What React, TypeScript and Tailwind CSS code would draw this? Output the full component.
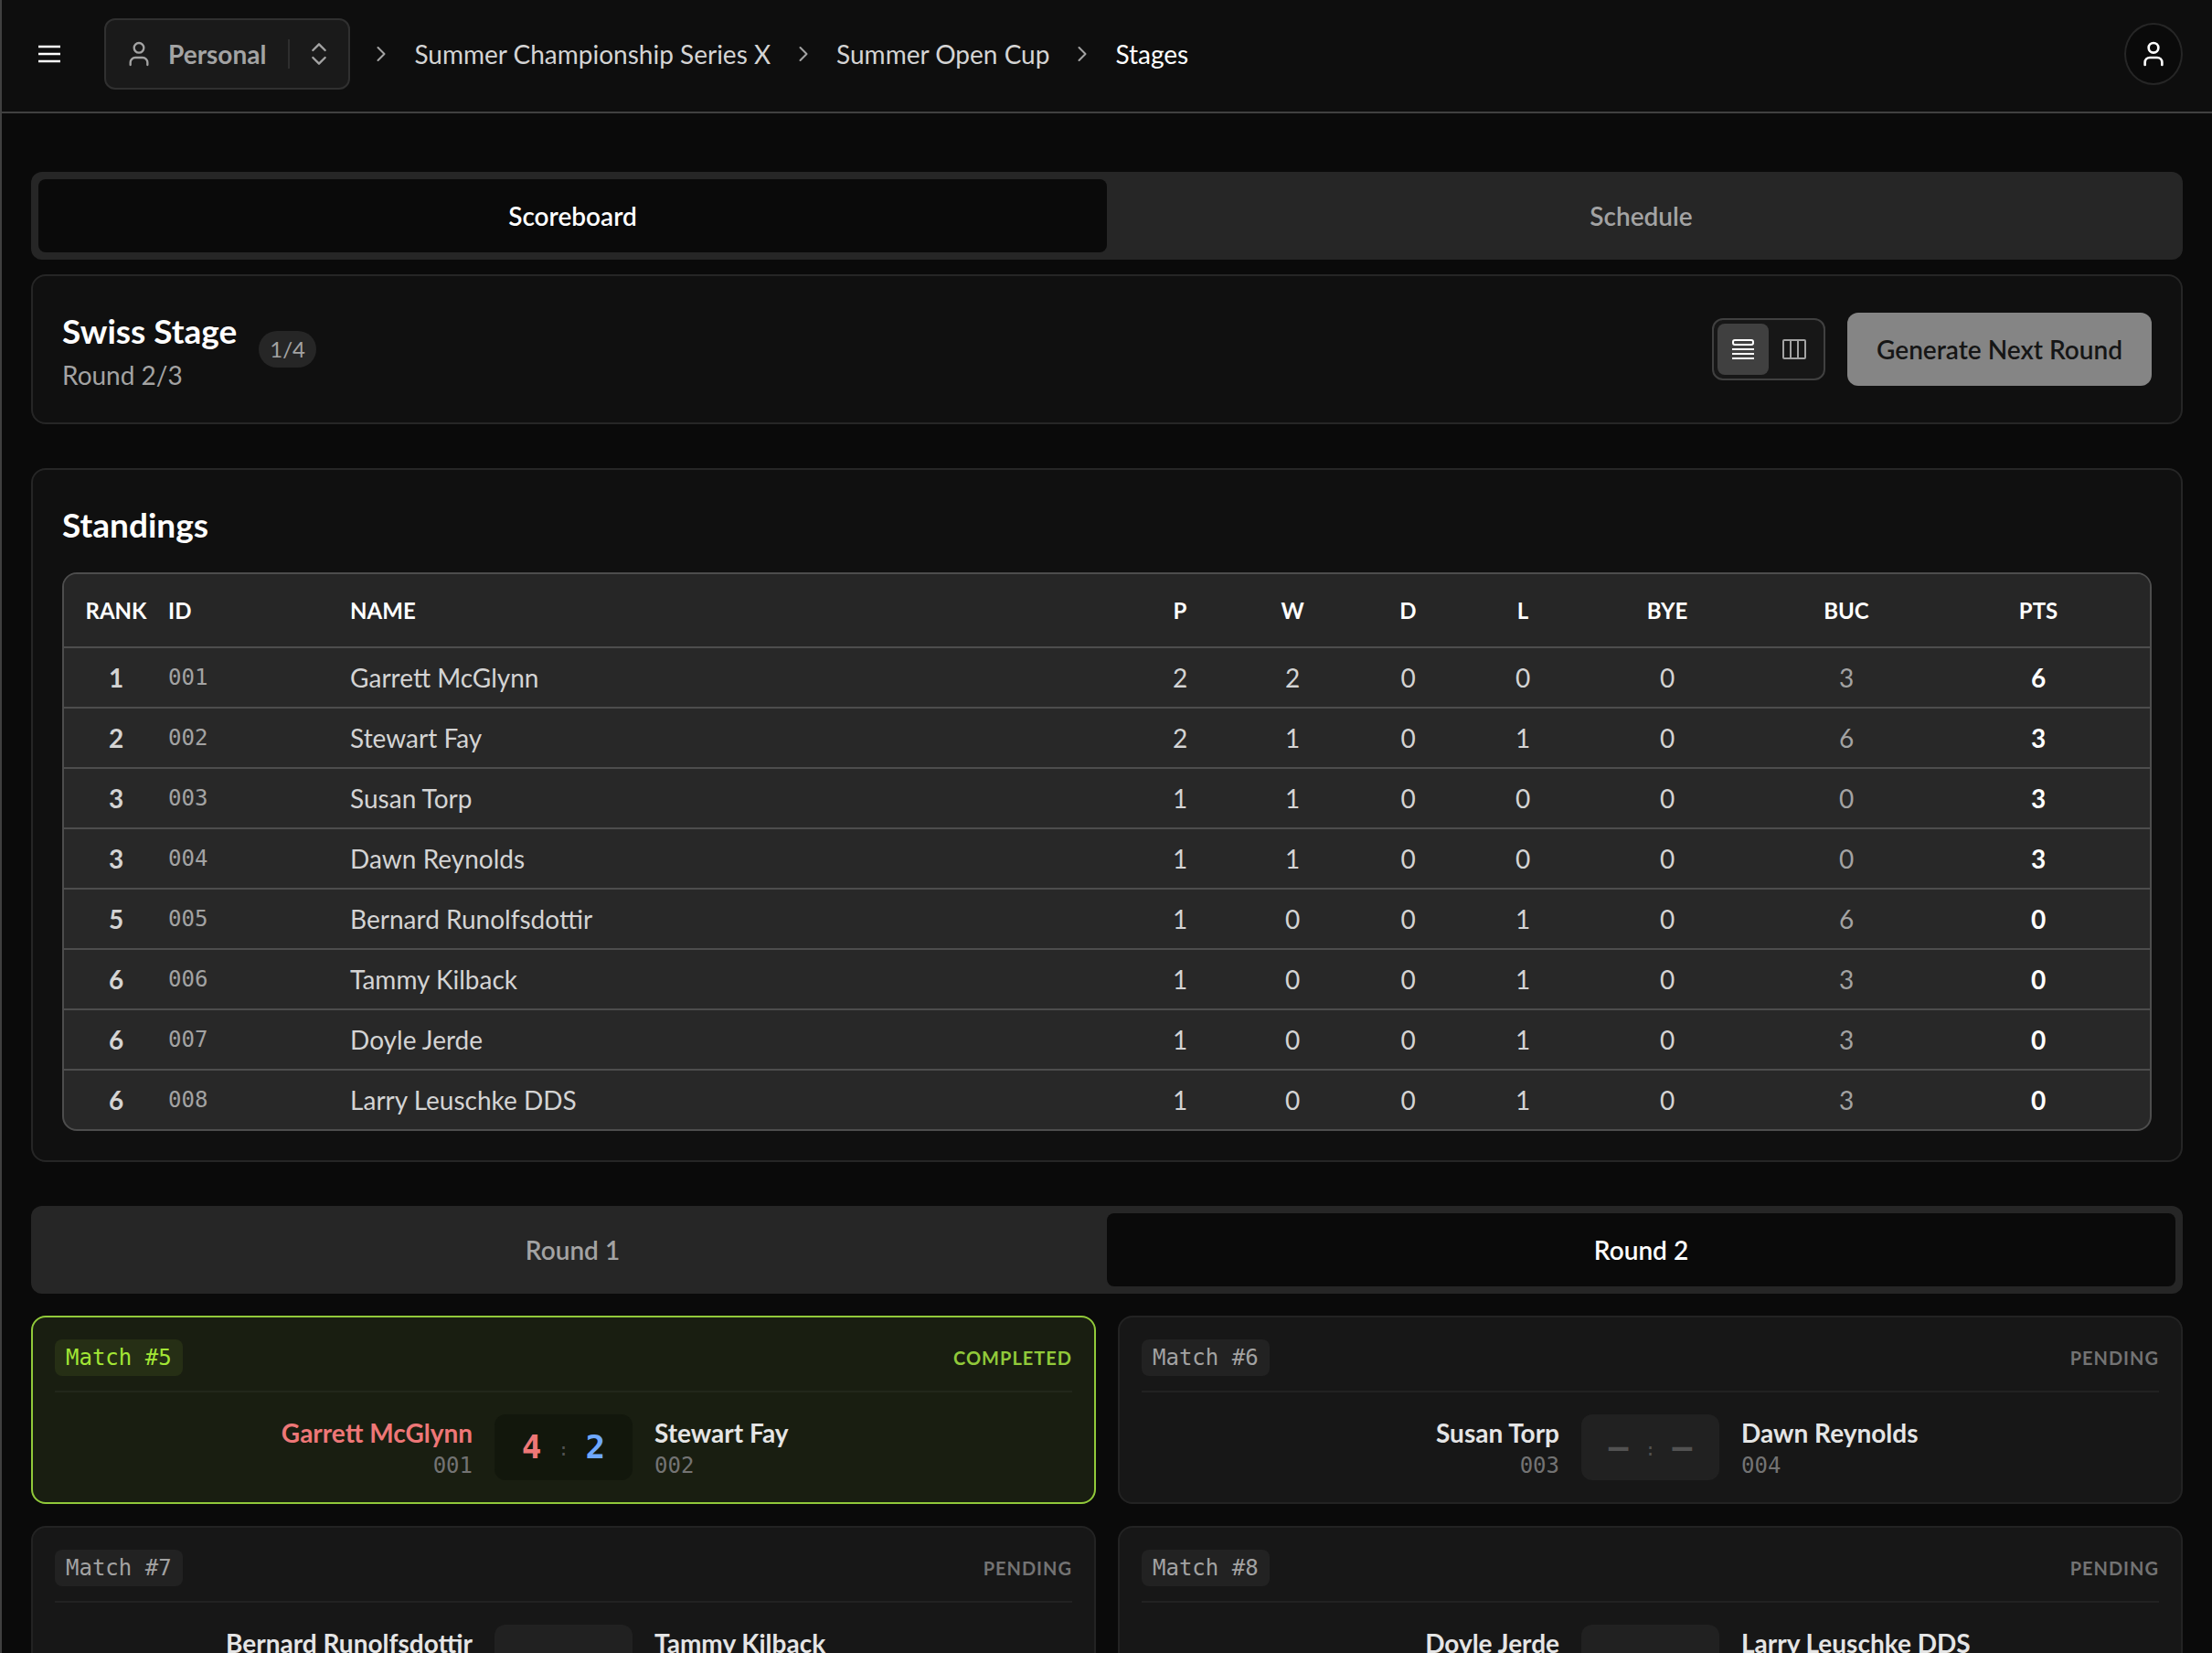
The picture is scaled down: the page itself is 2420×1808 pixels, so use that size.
import React, { useState } from 'react';
import { ChevronRight, ChevronsUpDown, User } from 'lucide-react';

type Team = { id: string; name: string };

type Standing = Team & {
  rank: number;
  played: number;
  wins: number;
  draws: number;
  losses: number;
  byes: number;
  buchholz: number;
  points: number;
};

type Match = {
  number: number;
  home: Team;
  away: Team;
  score?: [number, number];
};

const standings: Standing[] = [
  { rank: 1, id: '001', name: 'Garrett McGlynn', played: 2, wins: 2, draws: 0, losses: 0, byes: 0, buchholz: 3, points: 6 },
  { rank: 2, id: '002', name: 'Stewart Fay', played: 2, wins: 1, draws: 0, losses: 1, byes: 0, buchholz: 6, points: 3 },
  { rank: 3, id: '003', name: 'Susan Torp', played: 1, wins: 1, draws: 0, losses: 0, byes: 0, buchholz: 0, points: 3 },
  { rank: 3, id: '004', name: 'Dawn Reynolds', played: 1, wins: 1, draws: 0, losses: 0, byes: 0, buchholz: 0, points: 3 },
  { rank: 5, id: '005', name: 'Bernard Runolfsdottir', played: 1, wins: 0, draws: 0, losses: 1, byes: 0, buchholz: 6, points: 0 },
  { rank: 6, id: '006', name: 'Tammy Kilback', played: 1, wins: 0, draws: 0, losses: 1, byes: 0, buchholz: 3, points: 0 },
  { rank: 6, id: '007', name: 'Doyle Jerde', played: 1, wins: 0, draws: 0, losses: 1, byes: 0, buchholz: 3, points: 0 },
  { rank: 6, id: '008', name: 'Larry Leuschke DDS', played: 1, wins: 0, draws: 0, losses: 1, byes: 0, buchholz: 3, points: 0 },
];

const team = (index: number): Team => standings[index];

const rounds: Record<string, Match[]> = {
  'Round 1': [
    { number: 1, home: team(0), away: team(4), score: [3, 1] },
    { number: 2, home: team(1), away: team(5), score: [2, 0] },
    { number: 3, home: team(2), away: team(6), score: [2, 1] },
    { number: 4, home: team(3), away: team(7), score: [4, 3] },
  ],
  'Round 2': [
    { number: 5, home: team(0), away: team(1), score: [4, 2] },
    { number: 6, home: team(2), away: team(3) },
    { number: 7, home: team(4), away: team(5) },
    { number: 8, home: team(6), away: team(7) },
  ],
};

const mono = "font-['DejaVu_Sans_Mono',monospace]";

function MenuIcon() {
  return (
    <svg width="32" height="32" viewBox="0 0 24 24" fill="none" stroke="currentColor" strokeWidth="2">
      <path d="M3 6h18M3 12h18M3 18h18" />
    </svg>
  );
}

function RowsIcon() {
  return (
    <svg width="28" height="28" viewBox="0 0 28 28" fill="none" stroke="currentColor" strokeWidth="2">
      <rect x="3" y="4" width="22" height="5" rx="2" />
      <path d="M2 14h24M2 19h24M2 24h24" />
    </svg>
  );
}

function ColumnsIcon() {
  return (
    <svg width="28" height="28" viewBox="0 0 28 28" fill="none" stroke="currentColor" strokeWidth="2">
      <rect x="2" y="4" width="24" height="20" rx="1" />
      <path d="M10 4v20M18 4v20" />
    </svg>
  );
}

function Header() {
  return (
    <header className="flex items-center justify-between border-b-2 border-[#404040] bg-[#0e0e0e] pt-5 pr-8 pb-6 pl-9">
      <div className="flex items-center">
        <button type="button" className="text-white" aria-label="Menu">
          <MenuIcon />
        </button>
        <button
          type="button"
          className="ml-11 flex h-[78px] items-center rounded-xl border-2 border-[#303030] bg-[#1a1a1a] pr-4 pl-5 text-[#a3a3a3]"
        >
          <User size={32} strokeWidth={1.75} />
          <span className="ml-4 font-bold">Personal</span>
          <span className="mr-4 ml-6 h-8 w-0.5 bg-[#2e2e2e]" />
          <ChevronsUpDown size={32} strokeWidth={1.75} />
        </button>
        <nav className="ml-5 flex items-center gap-[22px]" aria-label="Breadcrumb">
          <ChevronRight size={28} strokeWidth={1.75} className="text-[#a3a3a3]" />
          <a href="#series" className="text-[#d4d4d4]">Summer Championship Series X</a>
          <ChevronRight size={28} strokeWidth={1.75} className="text-[#a3a3a3]" />
          <a href="#cup" className="text-[#d4d4d4]">Summer Open Cup</a>
          <ChevronRight size={28} strokeWidth={1.75} className="text-[#a3a3a3]" />
          <a href="#stages" aria-current="page" className="text-white">Stages</a>
        </nav>
      </div>
      <button
        type="button"
        aria-label="Account"
        className="flex h-[68px] w-16 items-center justify-center rounded-[50%] border-2 border-[#262626] bg-[#0a0a0a] text-white"
      >
        <User size={32} strokeWidth={2} />
      </button>
    </header>
  );
}

function Tabs({ items, active, onChange }: { items: string[]; active: string; onChange: (item: string) => void }) {
  return (
    <div role="tablist" className="flex rounded-xl bg-[#262626] p-2">
      {items.map((item) => (
        <button
          key={item}
          type="button"
          role="tab"
          aria-selected={item === active}
          onClick={() => onChange(item)}
          className={`h-20 flex-1 rounded-lg font-semibold ${item === active ? 'bg-[#0a0a0a] text-white' : 'text-[#a3a3a3]'}`}
        >
          {item}
        </button>
      ))}
    </div>
  );
}

function StageCard() {
  const [view, setView] = useState('rows');
  const viewButton = 'flex size-14 items-center justify-center rounded-lg';

  return (
    <section className="flex h-[164px] items-center justify-between rounded-2xl border-2 border-[#262626] bg-[#101010] px-8">
      <div className="flex items-center gap-6">
        <div className="pt-2">
          <h2 className="text-[37px] leading-[48px] font-bold text-white">Swiss Stage</h2>
          <p className="leading-[48px] text-[#a3a3a3]">Round 2/3</p>
        </div>
        <span className="rounded-full bg-[#262626] px-3 text-2xl leading-10 text-[#a3a3a3]">1/4</span>
      </div>
      <div className="flex items-center gap-6">
        <div className="flex rounded-xl border-2 border-[#404040] bg-[#171717] p-1">
          <button
            type="button"
            aria-label="List view"
            onClick={() => setView('rows')}
            className={`${viewButton} ${view === 'rows' ? 'bg-[#404040] text-white' : 'text-[#a3a3a3]'}`}
          >
            <RowsIcon />
          </button>
          <button
            type="button"
            aria-label="Board view"
            onClick={() => setView('columns')}
            className={`${viewButton} ${view === 'columns' ? 'bg-[#404040] text-white' : 'text-[#a3a3a3]'}`}
          >
            <ColumnsIcon />
          </button>
        </div>
        <button type="button" className="h-20 rounded-xl bg-[#858585] px-8 font-semibold text-[#161616]">
          Generate Next Round
        </button>
      </div>
    </section>
  );
}

function StandingsCard() {
  return (
    <section className="rounded-2xl border-2 border-[#262626] bg-[#101010] px-8 pt-9 pb-8">
      <h2 className="text-[37px] leading-[48px] font-bold text-white">Standings</h2>
      <div className="mt-7 overflow-hidden rounded-2xl border-2 border-[#4d4d4d] bg-[#282828]">
        <table className="w-full table-fixed text-center text-[#d4d4d4]">
          <colgroup>
            <col className="w-[5%]" />
            <col className="w-[199px]" />
            <col />
            <col className="w-[144px]" />
            <col className="w-[102px]" />
            <col className="w-[151px]" />
            <col className="w-[100px]" />
            <col className="w-[216px]" />
            <col className="w-[176px]" />
            <col className="w-[244px]" />
          </colgroup>
          <thead>
            <tr className="h-20 border-b-2 border-[#4d4d4d] bg-[#262626] text-2xl font-bold text-white">
              <th>RANK</th>
              <th className="text-left">ID</th>
              <th className="text-left">NAME</th>
              <th>P</th>
              <th>W</th>
              <th>D</th>
              <th>L</th>
              <th>BYE</th>
              <th>BUC</th>
              <th>PTS</th>
            </tr>
          </thead>
          <tbody>
            {standings.map((row) => (
              <tr key={row.id} className="h-[66px] border-b-2 border-[#4d4d4d] last:h-[65px] last:border-b-0">
                <td className="font-bold">{row.rank}</td>
                <td className={`${mono} text-left text-2xl text-[#a3a3a3]`}>{row.id}</td>
                <td className="text-left">{row.name}</td>
                <td>{row.played}</td>
                <td>{row.wins}</td>
                <td>{row.draws}</td>
                <td>{row.losses}</td>
                <td>{row.byes}</td>
                <td className="text-[#a3a3a3]">{row.buchholz}</td>
                <td className="font-bold text-white">{row.points}</td>
              </tr>
            ))}
          </tbody>
        </table>
      </div>
    </section>
  );
}

function MatchCard({ match }: { match: Match }) {
  const { number, home, away, score } = match;
  const done = score !== undefined;
  const homeWon = done && score[0] > score[1];

  return (
    <article
      className={`rounded-2xl border-2 p-6 ${done ? 'border-[#91c93a] bg-[#191e11]' : 'border-[#232323] bg-[#171717]'}`}
    >
      <div className={`flex items-center justify-between border-b-2 pb-4 ${done ? 'border-[#22271b]' : 'border-[#222222]'}`}>
        <span
          className={`${mono} rounded-lg px-3 text-2xl leading-10 ${done ? 'bg-[#262f15] text-[#a3e635]' : 'bg-[#222222] text-[#a3a3a3]'}`}
        >
          Match #{number}
        </span>
        <span className={`text-xl font-bold tracking-wider ${done ? 'text-[#91c93a]' : 'text-[#737373]'}`}>
          {done ? 'COMPLETED' : 'PENDING'}
        </span>
      </div>
      <div className="flex items-center gap-6 pt-6">
        <div className="min-w-0 flex-1 pt-1 text-right">
          <div className={`leading-8 font-bold ${homeWon ? 'text-[#ee7777]' : 'text-[#e5e5e5]'}`}>{home.name}</div>
          <div className={`${mono} pt-1 text-2xl leading-8 text-[#737373]`}>{home.id}</div>
        </div>
        <div
          className={`${mono} flex h-[72px] w-[151px] items-center justify-center gap-[18px] rounded-xl text-4xl font-bold ${done ? 'bg-[#12170c]' : 'bg-[#212121] text-[#525252]'}`}
        >
          <span className={done ? 'text-[#ee7777]' : ''}>{done ? score[0] : '–'}</span>
          <span className="pt-1 text-xl font-normal text-[#525252]">:</span>
          <span className={done ? 'text-[#6ea8fe]' : ''}>{done ? score[1] : '–'}</span>
        </div>
        <div className="min-w-0 flex-1 pt-1">
          <div className="leading-8 font-bold text-[#e5e5e5]">{away.name}</div>
          <div className={`${mono} pt-1 text-2xl leading-8 text-[#737373]`}>{away.id}</div>
        </div>
      </div>
    </article>
  );
}

export default function App() {
  const [tab, setTab] = useState('Scoreboard');
  const [round, setRound] = useState('Round 2');

  return (
    <div className="min-h-screen border-l-2 border-[#404040] bg-[#0a0a0a] font-['Lato',sans-serif] text-[28px] leading-10">
      <Header />
      <main className="px-8 py-16">
        <Tabs items={['Scoreboard', 'Schedule']} active={tab} onChange={setTab} />
        <div className="mt-4">
          <StageCard />
        </div>
        <div className="mt-12">
          <StandingsCard />
        </div>
        <div className="mt-12">
          <Tabs items={Object.keys(rounds)} active={round} onChange={setRound} />
        </div>
        <div className="mt-6 grid grid-cols-2 gap-6">
          {rounds[round].map((match) => (
            <MatchCard key={match.number} match={match} />
          ))}
        </div>
      </main>
    </div>
  );
}
